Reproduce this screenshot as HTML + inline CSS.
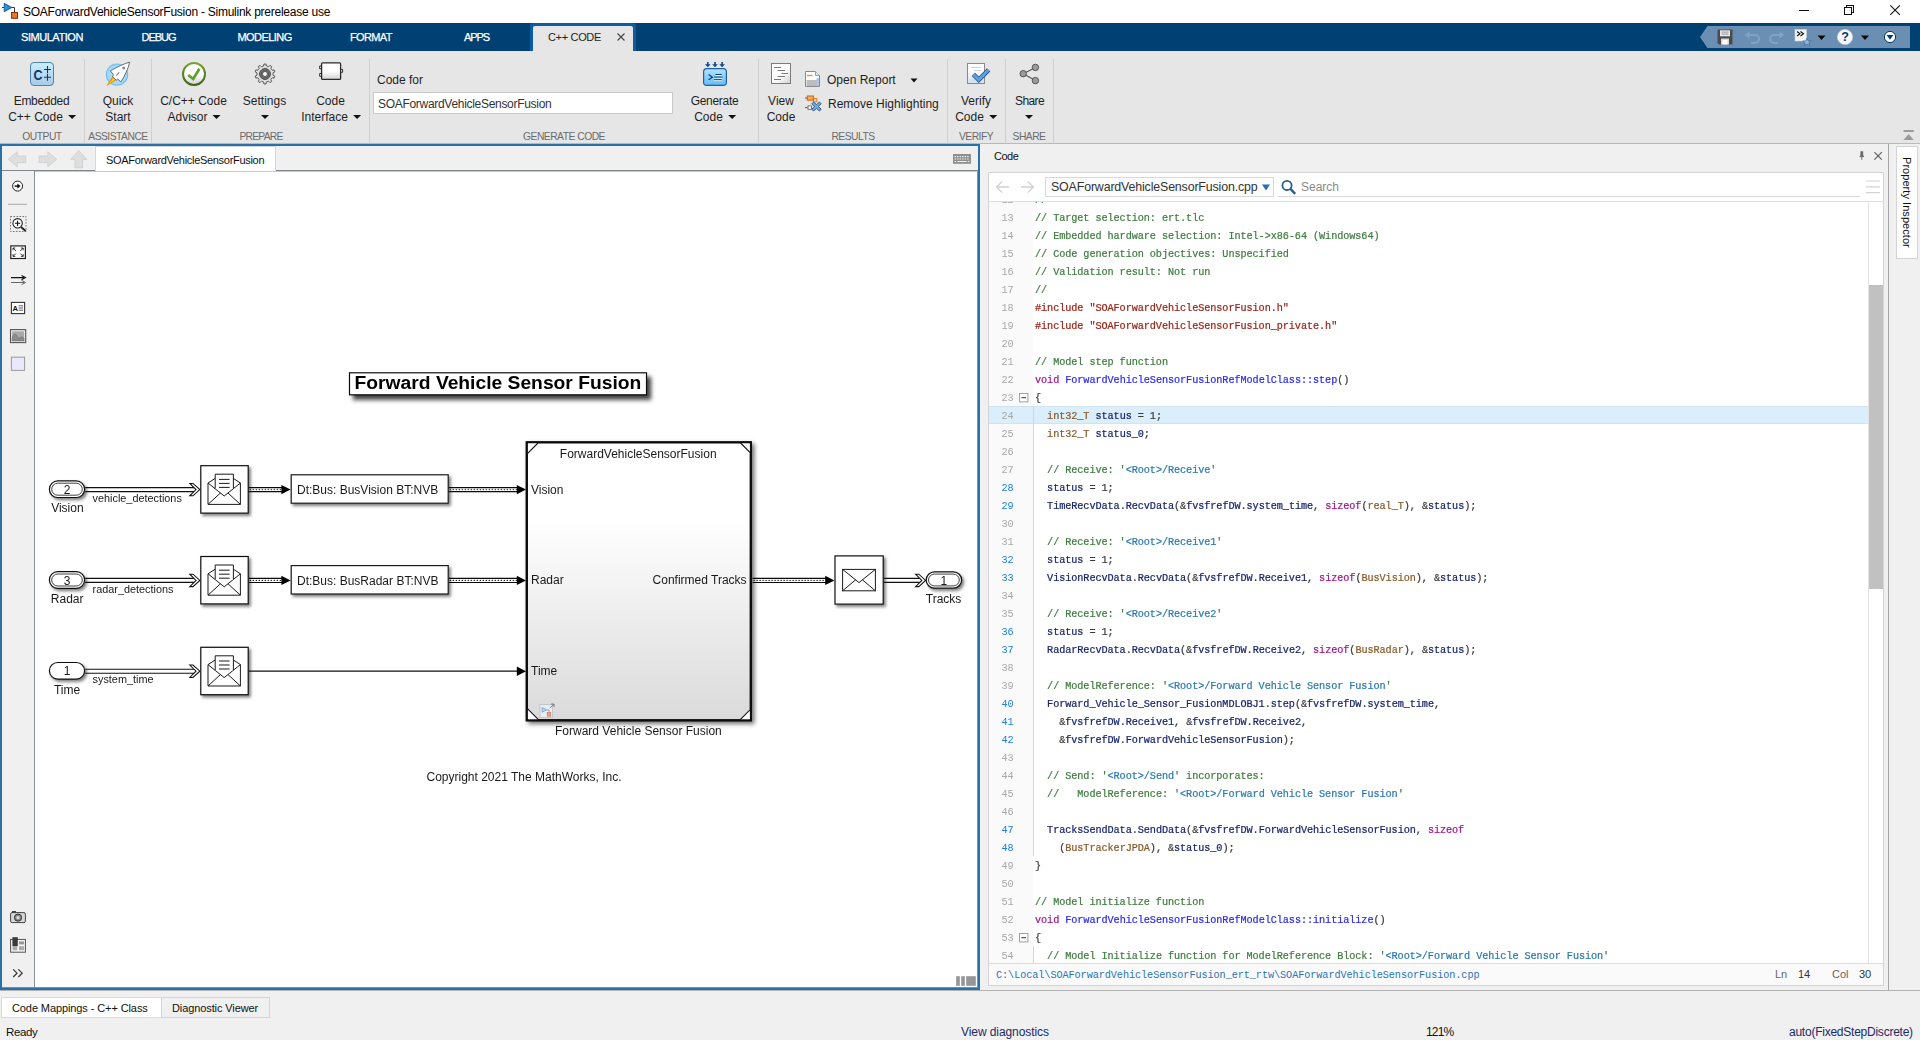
<!DOCTYPE html>
<html><head><meta charset="utf-8"><title>SOAForwardVehicleSensorFusion - Simulink prerelease use</title>
<style>
*{box-sizing:border-box;margin:0;padding:0}
html,body{width:1920px;height:1040px;overflow:hidden;background:#f0f0f0;font-family:"Liberation Sans",sans-serif;font-size:12px;color:#1a1a1a}
.a{position:absolute}
.t{position:absolute;white-space:nowrap;line-height:16px;height:16px}
#titlebar{left:0;top:0;width:1920px;height:23px;background:#fff}
#tabbar{left:0;top:23px;width:1920px;height:28px;background:#004073}
#tabbar .tb{position:absolute;top:6px;color:#fff;-webkit-text-stroke:0.25px #fff;font-size:11px;line-height:16px;white-space:nowrap;letter-spacing:-0.45px}
#acttab{left:533px;top:26px;width:100px;height:25px;background:#e6e6e6;border-radius:2px 2px 0 0}
#strip{left:0;top:51px;width:1920px;height:93px;background:#e6e6e6;border-bottom:1px solid #b9b9b9}
.sep{position:absolute;top:59px;width:1px;height:84px;background:#cfcfcf}
.lbl{position:absolute;white-space:nowrap;font-size:12px;line-height:16px;height:16px;color:#1f1f1f;text-align:center;transform:translateX(-50%)}
.sec{position:absolute;top:129px;white-space:nowrap;font-size:10.3px;line-height:16px;color:#6b6b6b;transform:translateX(-50%);letter-spacing:-0.5px}
.dd{display:inline-block;width:0;height:0;border-left:4px solid transparent;border-right:4px solid transparent;border-top:4.4px solid #111;vertical-align:middle;margin-left:5px;position:relative;top:-1px}
/* main */
#frame{left:0;top:144px;width:980px;height:846px;background:#2971a9}
#exbar{left:2px;top:146px;width:976px;height:25px;background:#f0f0f0;border-bottom:1px solid #80868c}
#extab{left:95px;top:146px;width:181px;height:25px;background:#fff;border:1px solid #d6d6d6;border-bottom:none}
#palette{left:2px;top:171px;width:33px;height:817px;border-bottom:1px solid #8a8a8a;background:#f0f0f0;border-right:1px solid #8a9096}
#canvas{left:35px;top:171px;width:943px;height:817px;border-bottom:1px solid #8a8a8a;background:#fff;border-top:1px solid #c6c8ca;border-right:1px solid #8e8e8e}
/* code panel */
#cpanel{left:980px;top:144px;width:909px;height:846px;background:#f0f0f0;border-right:1px solid #a6a6a6}
#cbox{left:988px;top:172px;width:896px;height:814px;background:#fff;border:1px solid #d4d4d4}
#gutter{left:989px;top:202px;width:44px;height:761px;background:#fafafa}
#code{will-change:transform;-webkit-text-stroke:0.22px;left:989px;top:202px;width:879px;height:761px;overflow:hidden;font-family:"Liberation Mono",monospace;font-size:10.2px;letter-spacing:-0.07px}
#code .in{position:absolute;left:0;top:-12px;width:879px}
.cl{height:18px;line-height:21.4px;position:relative;white-space:pre}
.cl.hl{background:#dbeefb;box-shadow:inset 0 1px 0 #cfe3f1,inset 0 -1px 0 #cfe3f1}
.ln{-webkit-text-stroke:0;display:inline-block;width:46px;padding-right:21.5px;text-align:right;color:#a8a8a8}
.ln.b{color:#1e7fe0}
.c{color:#3f7d3f}.k{color:#2a7ab0}.p{color:#9a2318}.m{color:#a0168f}.f{color:#2b2bf0}.y{color:#8a5a2a}.i{color:#18256e}.d{color:#3a3a3a}
#cfoot{left:989px;top:963px;width:894px;height:22px;background:#fafafa;border-top:1px solid #dcdcdc}
#sbar{left:1868px;top:202px;width:15px;height:761px;background:#fff;border-left:1px solid #e4e4e4}
#thumb{left:1869px;top:285px;width:14px;height:303.6px;background:#c1c1c1}
svg{position:absolute;overflow:visible}
</style></head><body>
<!-- TITLE BAR -->
<div class="a" id="titlebar"></div>
<svg style="left:0;top:0" width="22" height="22" viewBox="0 0 22 22"><path d="M2 7.5 H4.5 M11 7.5 H14.5 V12.5" fill="none" stroke="#3a3a3a" stroke-width="1"/><path d="M4.3 3.4 L11.6 7.5 L4.3 11.6 Z" fill="#3f8fd2" stroke="#1b66ae" stroke-width="1.1" stroke-linejoin="round"/><rect x="11.6" y="12.5" width="5.9" height="5.8" fill="#e27c22" stroke="#9a1e0c" stroke-width="1"/></svg>
<div class="t" style="left:23px;top:4px;font-size:12px;letter-spacing:-0.25px;color:#000">SOAForwardVehicleSensorFusion - Simulink prerelease use</div>
<svg style="left:1798px;top:4px" width="110" height="14" viewBox="0 0 110 14"><path d="M1 6.5 H11" stroke="#111" stroke-width="1"/><path d="M46.5 3.5 H53.5 V10.5 H46.5 Z M48.5 3.5 V1.5 H55.5 V8.5 H53.5" fill="none" stroke="#111" stroke-width="1.05"/><path d="M92.3 1.3 L101.9 10.9 M101.9 1.3 L92.3 10.9" stroke="#111" stroke-width="1.1"/></svg>
<!-- TAB BAR -->
<div class="a" id="tabbar">
<span class="tb" style="left:21px">SIMULATION</span>
<span class="tb" style="left:141.5px;letter-spacing:-1px">DEBUG</span>
<span class="tb" style="left:237.5px;letter-spacing:-0.55px">MODELING</span>
<span class="tb" style="left:350px;letter-spacing:-0.65px">FORMAT</span>
<span class="tb" style="left:464px;letter-spacing:-1.05px">APPS</span>
</div>
<div class="a" style="left:530px;top:23px;width:106px;height:28px;background:#0d5ca3;border-radius:3px 3px 0 0"></div><div class="a" id="acttab"></div>
<div class="t" style="left:548px;top:29px;font-size:11px;letter-spacing:-0.33px;color:#1f1f1f">C++ CODE</div>
<svg style="left:616px;top:32px" width="10" height="10" viewBox="0 0 10 10"><path d="M1.5 1.5 L8.5 8.5 M8.5 1.5 L1.5 8.5" stroke="#444" stroke-width="1.1"/></svg>
<!-- QAT -->
<svg style="left:1700px;top:26px" width="210" height="22" viewBox="0 0 210 22">
<path d="M0 11 L7.5 0 H210 V22 H7.5 Z" fill="#6a8fb3"/>
<!-- save -->
<g transform="translate(17.5,3.5)"><path d="M0 0 H15 V15 H1.5 L0 13.5 Z" fill="#4a4a4a"/><rect x="2.5" y="0.8" width="10" height="6" fill="#e9e9e9"/><path d="M4 2.6 H11 M4 4.6 H11" stroke="#888" stroke-width="0.8"/><rect x="3.5" y="9" width="8" height="6" fill="#d9d9d9"/><rect x="5" y="10.5" width="5" height="4.5" fill="#fff"/></g>
<!-- undo -->
<path d="M46.5 9 H55 a4 4 0 0 1 0 8 H51" fill="none" stroke="#7fa3c7" stroke-width="2"/><path d="M44.5 9 L49.5 5.5 V12.5 Z" fill="#7fa3c7"/>
<!-- redo -->
<path d="M82 9 H74 a4 4 0 0 0 0 8 H78" fill="none" stroke="#7fa3c7" stroke-width="2"/><path d="M84.5 9 L79.5 5.5 V12.5 Z" fill="#7fa3c7"/>
<!-- fav cmds -->
<rect x="95" y="3.5" width="11.5" height="11.5" fill="#f4f4f4" stroke="#cfd6dd" stroke-width="0.6"/><path d="M97 5.5 L100 7.8 L97 10 M100.5 5.5 L103.5 7.8 L100.5 10" fill="none" stroke="#111" stroke-width="1.1"/>
<path d="M107 12 L108.2 15 L111.3 15 L108.8 16.9 L109.8 20 L107 18.1 L104.2 20 L105.2 16.9 L102.7 15 L105.8 15 Z" fill="#8fb8e0" stroke="#3d6a96" stroke-width="0.7"/>
<path d="M117.5 9.5 H125.5 L121.5 14 Z" fill="#0a0a0a"/>
<!-- help -->
<circle cx="145" cy="11" r="7.6" fill="#f6f6f6" stroke="#d0d7de" stroke-width="0.6"/><text x="145" y="15.3" font-family="Liberation Sans,sans-serif" font-weight="bold" font-size="12.5" text-anchor="middle" fill="#003a6b">?</text>
<path d="M161 9.5 H169 L165 14 Z" fill="#0a0a0a"/>
<circle cx="190" cy="11" r="5.6" fill="#fff" stroke="#003a6b" stroke-width="1"/><path d="M186.6 9 H193.4 L190 13.8 Z" fill="#003a6b"/>
</svg>
<!-- TOOLSTRIP -->
<div class="a" id="strip"></div>
<div class="sep" style="left:84px"></div><div class="sep" style="left:151px"></div><div class="sep" style="left:369px"></div><div class="sep" style="left:758px"></div><div class="sep" style="left:947px"></div><div class="sep" style="left:1005px"></div><div class="sep" style="left:1053px"></div>
<div class="lbl" style="left:41.5px;top:93px;letter-spacing:-0.3px">Embedded</div>
<div class="lbl" style="left:42px;top:109px">C++ Code<i class="dd"></i></div>
<div class="lbl" style="left:118px;top:93px">Quick</div>
<div class="lbl" style="left:118px;top:109px">Start</div>
<div class="lbl" style="left:193.5px;top:93px">C/C++ Code</div>
<div class="lbl" style="left:194px;top:109px">Advisor<i class="dd"></i></div>
<div class="lbl" style="left:264.5px;top:93px">Settings</div>
<div class="lbl" style="left:264.5px;top:109px"><i class="dd" style="margin-left:0"></i></div>
<div class="lbl" style="left:330.5px;top:93px">Code</div>
<div class="lbl" style="left:331px;top:109px">Interface<i class="dd"></i></div>
<div class="t" style="left:377px;top:72px;color:#1f1f1f">Code for</div>
<div class="a" style="left:373px;top:92px;width:300px;height:22px;background:#fff;border:1px solid #c9c9c9"></div>
<div class="t" style="left:378px;top:96px;font-size:12px;letter-spacing:-0.3px;color:#333">SOAForwardVehicleSensorFusion</div>
<div class="lbl" style="left:714.5px;top:93px;letter-spacing:-0.3px">Generate</div>
<div class="lbl" style="left:715px;top:109px">Code<i class="dd"></i></div>
<div class="lbl" style="left:781px;top:93px">View</div>
<div class="lbl" style="left:781px;top:109px">Code</div>
<div class="t" style="left:827px;top:72px;color:#1f1f1f">Open Report</div>
<svg style="left:910px;top:78px" width="8" height="5" viewBox="0 0 8 5"><path d="M0.5 0.5 H7.5 L4 4.5 Z" fill="#111"/></svg>
<div class="t" style="left:828px;top:96px;color:#1f1f1f">Remove Highlighting</div>
<div class="lbl" style="left:976px;top:93px">Verify</div>
<div class="lbl" style="left:976px;top:109px">Code<i class="dd"></i></div>
<div class="lbl" style="left:1029.5px;top:93px;letter-spacing:-0.6px">Share</div>
<div class="lbl" style="left:1029px;top:109px"><i class="dd" style="margin-left:0"></i></div>
<div class="sec" style="left:42px">OUTPUT</div>
<div class="sec" style="left:118px">ASSISTANCE</div>
<div class="sec" style="left:261px;letter-spacing:-0.75px">PREPARE</div>
<div class="sec" style="left:564px">GENERATE CODE</div>
<div class="sec" style="left:853px">RESULTS</div>
<div class="sec" style="left:976px">VERIFY</div>
<div class="sec" style="left:1029px">SHARE</div>
<svg style="left:1901.5px;top:129px" width="14" height="12" viewBox="0 0 14 12"><path d="M1.5 2 H11.7" stroke="#929292" stroke-width="1.8"/><path d="M6.6 5 L11.7 11 H1.5 Z" fill="#9a9a9a"/></svg>
<!-- TOOLSTRIP ICONS -->
<svg style="left:0;top:51px" width="1100" height="93" viewBox="0 51 1100 93">
<defs>
<linearGradient id="gcpp" x1="0" y1="0" x2="0" y2="1"><stop offset="0" stop-color="#cdeefd"/><stop offset="1" stop-color="#a6cbe6"/></linearGradient>
<linearGradient id="ggen" x1="0" y1="0" x2="0" y2="1"><stop offset="0" stop-color="#b5e2fc"/><stop offset="1" stop-color="#63bdf3"/></linearGradient>
<linearGradient id="gring" x1="0" y1="0" x2="0" y2="1"><stop offset="0" stop-color="#74a530"/><stop offset="1" stop-color="#3c6418"/></linearGradient>
<linearGradient id="gin" x1="0" y1="0" x2="0" y2="1"><stop offset="0.5" stop-color="#ffffff"/><stop offset="1" stop-color="#d2d2d2"/></linearGradient>
<linearGradient id="gdoc" x1="0" y1="0" x2="1" y2="1"><stop offset="0.55" stop-color="#ffffff"/><stop offset="1" stop-color="#cfcfcf"/></linearGradient>
<linearGradient id="gver" x1="0" y1="0" x2="0" y2="1"><stop offset="0.3" stop-color="#ffffff"/><stop offset="1" stop-color="#cfe0f0"/></linearGradient>
<radialGradient id="ggear" cx="0.5" cy="0.5" r="0.5"><stop offset="0.25" stop-color="#fff"/><stop offset="0.32" stop-color="#444"/><stop offset="0.55" stop-color="#9a9a9a"/><stop offset="0.62" stop-color="#3c3c3c"/><stop offset="0.75" stop-color="#e8e8e8"/><stop offset="1" stop-color="#dcdcdc"/></radialGradient>
</defs>
<!-- C++ -->
<rect x="30.5" y="62.5" width="23" height="23" rx="3.5" fill="url(#gcpp)" stroke="#4b83b3" stroke-width="1"/>
<text x="33.4" y="79.5" font-family="Liberation Sans,sans-serif" font-weight="bold" font-size="14.6" textLength="9" lengthAdjust="spacingAndGlyphs" fill="#0b3b74">C</text>
<path d="M44 69.5 H51 M47.5 66 V73 M44 77.2 H51 M47.5 73.7 V80.7" stroke="#0b3b74" stroke-width="1.1" fill="none"/>
<!-- rocket -->
<circle cx="117" cy="74.6" r="10.6" fill="#a4dbfb" stroke="#74bdf4" stroke-width="1.2"/>
<path d="M112.8 76.2 L116.8 80 L106 85.9 Z" fill="#ff8a00"/><path d="M113.8 77.6 L115.6 79.2 L108.6 84 Z" fill="#ffd21a"/>
<path d="M129.7 62.1 C124.5 63.4 117 67.2 110.3 70.8 L113.4 74.6 L112.6 76.6 L116.2 80.2 L117.6 79 L120.9 81.9 C124.4 76.4 128.4 68.4 129.7 62.1 Z" fill="#fff" stroke="#4a4a4a" stroke-width="0.8" stroke-linejoin="round"/>
<circle cx="123.7" cy="68" r="1.5" fill="#8a8a8a"/><path d="M116.2 75.6 L119.3 72.4" stroke="#8a8a8a" stroke-width="1.2"/>
<!-- check -->
<circle cx="194" cy="74" r="11" fill="url(#gin)" stroke="url(#gring)" stroke-width="2"/>
<path d="M188.2 75 L193.2 79 L199.4 68.8" fill="none" stroke="#62a02a" stroke-width="2.7"/>
<!-- gear -->
<g transform="translate(265,74)">
<path d="M-1.37 -7.98 L-1.07 -9.94 L1.07 -9.94 L1.37 -7.98 L3.59 -7.26 L4.98 -8.67 L6.71 -7.42 L5.80 -5.66 L7.17 -3.77 L9.13 -4.09 L9.79 -2.06 L8.02 -1.17 L8.02 1.17 L9.79 2.06 L9.13 4.09 L7.17 3.77 L5.80 5.66 L6.71 7.42 L4.98 8.67 L3.59 7.26 L1.37 7.98 L1.07 9.94 L-1.07 9.94 L-1.37 7.98 L-3.59 7.26 L-4.98 8.67 L-6.71 7.42 L-5.80 5.66 L-7.17 3.77 L-9.13 4.09 L-9.79 2.06 L-8.02 1.17 L-8.02 -1.17 L-9.79 -2.06 L-9.13 -4.09 L-7.17 -3.77 L-5.80 -5.66 L-6.71 -7.42 L-4.98 -8.67 L-3.59 -7.26 Z" fill="#e0e0e0" stroke="#4c4c4c" stroke-width="0.9" stroke-linejoin="round"/>
<circle r="5.4" fill="#8a8a8a" stroke="#3a3a3a" stroke-width="1"/>
<circle r="3.7" fill="none" stroke="#5a5a5a" stroke-width="1.2"/>
<circle r="2.5" fill="#fff" stroke="#3a3a3a" stroke-width="0.8"/>
</g>
<!-- code interface -->
<path d="M319.7 66 H322 V68.8 H319.7 Z M319.7 73.5 H322 V76.3 H319.7 Z M340 69.3 H342.6 V72.3 H340 Z" fill="#fff" stroke="#2a2a2a" stroke-width="1"/>
<rect x="321.6" y="62.8" width="19" height="16.6" rx="1" fill="url(#gin)" stroke="#2a2a2a" stroke-width="1.3"/>
<!-- generate -->
<rect x="703.6" y="68.6" width="22.8" height="16.8" rx="3.2" fill="url(#ggen)" stroke="#1f5fa9" stroke-width="1.2"/>
<path d="M708.6 74.6 L712.4 77.2 L708.6 79.8" fill="none" stroke="#0c3f7d" stroke-width="1.2"/>
<path d="M715.5 75.4 H721.8 M714 78 H722.6 M714 80.6 H721.8" stroke="#fff" stroke-width="1"/>
<path d="M715.5 74.5 H721.8 M714 77.1 H722.6 M714 79.7 H721.8" stroke="#0c3f7d" stroke-width="1"/>
<g fill="#0b4a8f"><path id="da" d="M707 62 H708.6 V64.2 H710.6 L707.8 67.2 L705 64.2 H707 Z"/><use href="#da" x="7.2"/><use href="#da" x="14.3"/></g>
<!-- view code -->
<rect x="771.5" y="63.5" width="19" height="20" fill="url(#gdoc)" stroke="#7c7c7c" stroke-width="1"/>
<path d="M774 67.5 H781 M777.5 70.5 H785 M781.5 73.5 H788 M777.5 76.5 H785 M774 79.5 H781" stroke="#7a7a7a" stroke-width="1"/>
<!-- open report -->
<path d="M805.5 71.5 H815.5 L819.5 75.5 V86.5 H805.5 Z" fill="#fff" stroke="#8a8a8a" stroke-width="1"/>
<path d="M815.5 71.5 V75.5 H819.5" fill="#e8e8e8" stroke="#8a8a8a" stroke-width="0.8"/>
<path d="M807 75.5 H812.5" stroke="#f08a3c" stroke-width="1.4"/>
<rect x="806.5" y="80" width="12.5" height="6" fill="#bdbdbd"/><rect x="816.5" y="78" width="2.5" height="8" fill="#a9c6e6"/>
<!-- remove highlighting -->
<path d="M805 98 H807 M805 107.6 H807.6" stroke="#555" stroke-width="1" fill="none"/>
<rect x="813.4" y="98.6" width="3.4" height="3.2" fill="#f4d9b8" stroke="#dd7a22" stroke-width="1"/>
<rect x="807.4" y="96" width="6" height="4.2" fill="#f6a85e" stroke="#d96b12" stroke-width="1.1"/>
<rect x="808" y="105.9" width="3.6" height="3.4" fill="#fff" stroke="#666" stroke-width="0.9"/>
<path d="M813.6 102 L816.5 104.6 L819.4 102 L821.2 103.8 L818.4 106.5 L821.2 109.2 L819.4 111 L816.5 108.4 L813.6 111 L811.8 109.2 L814.6 106.5 L811.8 103.8 Z" fill="#76a8e0" stroke="#27507f" stroke-width="0.9" stroke-linejoin="round"/>
<!-- verify -->
<rect x="967.5" y="63.5" width="17" height="20" fill="url(#gver)" stroke="#8a8a8a" stroke-width="1"/>
<path d="M971 67.5 H981 M974 70.5 H981 M971 80 H976" stroke="#cfcfcf" stroke-width="1"/>
<path d="M973.4 74.4 L978.8 79.8 L988.6 69.8" fill="none" stroke="#1f4f8c" stroke-width="4.6" stroke-linejoin="miter"/>
<path d="M973.4 74.4 L978.8 79.8 L988.6 69.8" fill="none" stroke="#5f9fe0" stroke-width="3" stroke-linejoin="miter"/>
<!-- share -->
<path d="M1035.4 67.4 L1023.2 73.7 L1035.4 80.6" fill="none" stroke="#555" stroke-width="1.1"/>
<g fill="#9c9c9c" stroke="#555" stroke-width="1"><circle cx="1035.4" cy="67.4" r="3.2"/><circle cx="1023.2" cy="73.7" r="3.2"/><circle cx="1035.4" cy="80.6" r="3.2"/></g>
</svg>
<!-- MAIN FRAME -->
<div class="a" id="frame"></div>
<div class="a" id="exbar"></div>
<div class="a" id="extab"></div>
<div class="t" style="left:106px;top:152px;font-size:11px;letter-spacing:-0.3px;color:#111">SOAForwardVehicleSensorFusion</div>
<svg style="left:2px;top:146px" width="100" height="25" viewBox="2 146 100 25">
<g fill="#dedede" stroke="#cdcdcd" stroke-width="0.8">
<path d="M8.2 159.3 L17.2 151.8 V156 H25.8 V162.6 H17.2 V166.8 Z"/>
<path d="M56.8 159.3 L47.8 151.8 V156 H39.2 V162.6 H47.8 V166.8 Z"/>
<path d="M78.8 150.4 L86.8 159.4 H82.6 V167.8 H75 V159.4 H70.8 Z"/>
</g></svg>
<svg style="left:953px;top:153px" width="20" height="13" viewBox="0 0 20 13"><rect x="0" y="1" width="18" height="9.8" fill="#8f8f8f"/><path d="M1.6 3.6 H16.6 M1.6 6 H16.6" stroke="#f0f0f0" stroke-width="1.1" stroke-dasharray="1.5 1"/><path d="M1.6 8.5 H3.2 M4.4 8.5 H13.6 M14.8 8.5 H16.6" stroke="#f0f0f0" stroke-width="1.1"/></svg>
<div class="a" id="palette"></div>
<div class="a" id="canvas"></div>
<!-- palette icons -->
<svg style="left:2px;top:171px" width="33" height="816" viewBox="2 171 33 816">
<circle cx="17.6" cy="186.1" r="5" fill="#fff" stroke="#222" stroke-width="1"/><path d="M14.6 186.1 H18.6" stroke="#111" stroke-width="1.5"/><path d="M17.4 183.5 L20.6 186.1 L17.4 188.7 Z" fill="#111"/>
<path d="M8 204.3 H27" stroke="#a8a8a8" stroke-width="1"/>
<rect x="10.5" y="216.5" width="15.5" height="15" fill="none" stroke="#666" stroke-width="0.9" stroke-dasharray="1.6 1.4"/>
<circle cx="17.6" cy="223.3" r="4.7" fill="#fff" stroke="#222" stroke-width="1.1"/><path d="M15 223.3 H20.2 M17.6 220.7 V225.9" stroke="#111" stroke-width="1.1"/><path d="M21 227 L25.6 231" stroke="#222" stroke-width="1.8"/>
<rect x="10.8" y="245.9" width="14.6" height="12.6" fill="#fff" stroke="#222" stroke-width="1.2"/>
<path d="M13 248 L16 251 M13 248 H15.3 M13 248 V250.3 M23.2 248 L20.2 251 M23.2 248 H20.9 M23.2 248 V250.3 M13 256.4 L16 253.4 M13 256.4 H15.3 M13 256.4 V254.1 M23.2 256.4 L20.2 253.4 M23.2 256.4 H20.9 M23.2 256.4 V254.1" stroke="#222" stroke-width="0.9" fill="none"/>
<path d="M11 277.6 H24 M21.5 275.4 L25.5 277.6 L21.5 279.8" stroke="#111" stroke-width="1.1" fill="none"/>
<path d="M11 282.5 H24 M21.5 280.3 L25.5 282.5 L21.5 284.7" stroke="#444" stroke-width="0.8" fill="none"/>
<rect x="11.4" y="302.4" width="13.2" height="11.2" fill="#fff" stroke="#333" stroke-width="1.1"/>
<text x="12.6" y="311.2" font-family="Liberation Sans,sans-serif" font-weight="bold" font-size="7.5" fill="#111">A</text><path d="M18.6 305.8 H23 M18.6 308 H23 M18.6 310.2 H23" stroke="#333" stroke-width="0.8"/>
<rect x="10.5" y="329.6" width="15.2" height="13" fill="#e8e8e8" stroke="#555" stroke-width="1.1"/><rect x="12.2" y="331.4" width="11.8" height="9.4" fill="#a9a9a9"/><path d="M12.2 338.5 C13.5 333 16 333 17.5 337.5 C19 340 21 334.5 24 338.5 V340.8 H12.2 Z" fill="#8c8c8c" stroke="#666" stroke-width="0.6"/>
<rect x="11.4" y="357.2" width="13.2" height="13.2" fill="#e9e9fb" stroke="#9a9a9a" stroke-width="1"/>
<!-- bottom -->
<rect x="10.6" y="912.6" width="14.8" height="10" rx="1.5" fill="#d8d8d8" stroke="#444" stroke-width="1"/><rect x="12" y="911" width="4" height="2" fill="#444"/><circle cx="18" cy="917.6" r="3.6" fill="#888" stroke="#333" stroke-width="1"/><circle cx="18" cy="917.6" r="1.6" fill="#ddd"/>
<rect x="10.6" y="939.4" width="14.8" height="12.8" fill="#f4f4f4" stroke="#555" stroke-width="1"/><rect x="12.4" y="937.2" width="5.4" height="9" fill="#3a3a3a"/><rect x="19" y="941.4" width="5" height="3" fill="#999"/><rect x="12.6" y="946.2" width="4.6" height="4" fill="#aaa"/><rect x="19" y="946.2" width="5" height="4" fill="#aaa"/>
<path d="M13.2 969.4 L17 973.2 L13.2 977 M18.4 969.4 L22.2 973.2 L18.4 977" stroke="#333" stroke-width="1.2" fill="none"/>
</svg>
<svg style="left:956px;top:976px" width="20" height="10" viewBox="0 0 20 10"><rect x="0.2" y="0.2" width="3.6" height="9.6" fill="#969696"/><rect x="5.2" y="0.2" width="3.6" height="9.6" fill="#969696"/><rect x="10.2" y="0.2" width="9.6" height="9.6" fill="#969696"/></svg>
<!-- DIAGRAM -->
<svg style="left:35px;top:172px;will-change:transform" width="941" height="815" viewBox="35 172 941 815" font-family="Liberation Sans,sans-serif" fill="#1a1a1a">
<defs>
<filter id="sh" x="-20%" y="-20%" width="150%" height="150%"><feDropShadow dx="2" dy="2.2" stdDeviation="1.5" flood-color="#000" flood-opacity="0.5"/></filter>
<filter id="sh2" x="-10%" y="-30%" width="130%" height="190%"><feDropShadow dx="4" dy="4.5" stdDeviation="2" flood-color="#000" flood-opacity="0.75"/></filter>
<filter id="sh3" x="-10%" y="-10%" width="125%" height="125%"><feDropShadow dx="2.5" dy="2.5" stdDeviation="2" flood-color="#000" flood-opacity="0.55"/></filter>
<linearGradient id="gbig" x1="0" y1="0" x2="0" y2="1"><stop offset="0.28" stop-color="#ffffff"/><stop offset="1" stop-color="#dadada"/></linearGradient>
<g id="env" fill="none" stroke="#1a1a1a" stroke-width="1">
<path d="M0 0 L7.2 -4.6 M32.4 0 L25.4 -4.6 M0 0 V21.4 H32.4 V0"/>
<path d="M0 0 L16.2 13 L32.4 0"/>
<path d="M0 21.4 L12.4 10 M32.4 21.4 L20 10"/>
<path d="M7.2 5.8 V-8.8 H25.4 V5.8" fill="#fff"/>
<path d="M11 -3.6 H21.6 M11 0.4 H21.6 M11 4.4 H21.6"/>
</g>
<path id="chev" d="M-10 -6.2 H-6.8 L0 0 L-6.8 6.2 H-10 L-3.8 0 Z" fill="#fff" stroke="#111" stroke-width="1.05" stroke-linejoin="miter"/>
</defs>
<!-- title annotation -->
<rect x="349.5" y="372.8" width="297" height="22" fill="#fff" stroke="#111" stroke-width="1.2" filter="url(#sh2)"/>
<text x="354.6" y="389.4" font-size="19.25" font-weight="bold" fill="#000">Forward Vehicle Sensor Fusion</text>
<!-- big block -->
<rect x="526.8" y="442.3" width="224" height="278" fill="url(#gbig)" stroke="#0a0a0a" stroke-width="2.4" filter="url(#sh3)"/>
<path d="M538 443.4 L527.9 453.6 V443.4 Z M740.6 443.4 L749.8 453.6 V443.4 Z M538.2 719.2 L527.9 708.8 V719.2 Z M740.4 719.2 L749.8 708.8 V719.2 Z" fill="#fff"/><path d="M538 443 L527.4 453.6 M740.6 443 L751.2 453.6 M538.4 719.6 L527.4 708.6 M740.2 719.6 L751.2 708.6" stroke="#111" stroke-width="1.1" fill="none"/>
<text x="638.2" y="458.4" font-size="12" text-anchor="middle">ForwardVehicleSensorFusion</text>
<text x="531" y="493.6" font-size="12">Vision</text>
<text x="531" y="584.4" font-size="12">Radar</text>
<text x="531" y="675.2" font-size="12">Time</text>
<text x="746.6" y="584.4" font-size="12" text-anchor="end">Confirmed Tracks</text>
<text x="638.4" y="735.2" font-size="12" text-anchor="middle">Forward Vehicle Sensor Fusion</text>
<text x="524" y="781" font-size="12" text-anchor="middle">Copyright 2021 The MathWorks, Inc.</text>
<!-- model ref badge -->
<g><rect x="540" y="704.6" width="12.4" height="13" fill="#e9edf1" stroke="#b9bfc7" stroke-width="0.8"/><path d="M542.2 707.6 L546.6 709.9 L542.2 712.2 Z" fill="#bcd6ee" stroke="#6a9acb" stroke-width="0.7"/><path d="M546.6 710 H549 V712.6" fill="none" stroke="#888" stroke-width="0.7"/><rect x="547.2" y="712.6" width="3.6" height="3.6" fill="#eaa48c" stroke="#c4745a" stroke-width="0.6"/><path d="M549.8 708 L553.8 704.2 M551 704 H554 V707" fill="none" stroke="#666" stroke-width="0.8"/></g>
<!-- ROW 1 -->
<g filter="url(#sh)"><rect x="49.4" y="480.9" width="35.2" height="16.6" rx="8.3" fill="#fff" stroke="#111" stroke-width="1.2"/></g>
<rect x="51.7" y="483.2" width="30.6" height="12" rx="6" fill="none" stroke="#111" stroke-width="0.8"/>
<text x="67" y="494.1" font-size="12" text-anchor="middle">2</text>
<text x="67.4" y="512.4" font-size="12" text-anchor="middle">Vision</text>
<path d="M85.2 487.6 H194 M85.2 491.6 H194" stroke="#111" stroke-width="1.1"/>
<use href="#chev" x="199.8" y="489.6"/>
<text x="92.6" y="502.2" font-size="10.85">vehicle_detections</text>
<rect x="200.8" y="465.7" width="47.4" height="47.4" fill="#fff" stroke="#111" stroke-width="1.2" filter="url(#sh)"/>
<use href="#env" x="208" y="483"/>
<path d="M248.8 487.55 H283.0 M248.8 491.65 H283.0" stroke="#0a0a0a" stroke-width="1.15"/><path d="M250.3 489.6 H282.0" stroke="#0a0a0a" stroke-width="1.35" stroke-linecap="round" stroke-dasharray="0 3"/>
<path d="M281.4 484.9 L290.6 489.6 L281.4 494.3 Z" fill="#000"/>
<rect x="291.2" y="474.8" width="157" height="28.4" fill="#fff" stroke="#1a1a1a" stroke-width="1.2" filter="url(#sh)"/>
<text x="297" y="494" font-size="12">Dt:Bus: BusVision BT:NVB</text>
<path d="M448.8 487.55 H519.0 M448.8 491.65 H519.0" stroke="#0a0a0a" stroke-width="1.15"/><path d="M450.3 489.6 H518.0" stroke="#0a0a0a" stroke-width="1.35" stroke-linecap="round" stroke-dasharray="0 3"/>
<path d="M516.8 484.9 L526 489.6 L516.8 494.3 Z" fill="#000"/>
<!-- ROW 2 -->
<g filter="url(#sh)"><rect x="49.4" y="571.7" width="35.2" height="16.6" rx="8.3" fill="#fff" stroke="#111" stroke-width="1.2"/></g>
<rect x="51.7" y="574" width="30.6" height="12" rx="6" fill="none" stroke="#111" stroke-width="0.8"/>
<text x="67" y="585.2" font-size="12" text-anchor="middle">3</text>
<text x="67.2" y="603.2" font-size="12" text-anchor="middle">Radar</text>
<path d="M85.2 578.4 H194 M85.2 582.4 H194" stroke="#111" stroke-width="1.1"/>
<use href="#chev" x="199.8" y="580.4"/>
<text x="92.6" y="593" font-size="10.85">radar_detections</text>
<rect x="200.8" y="556.5" width="47.4" height="47.4" fill="#fff" stroke="#111" stroke-width="1.2" filter="url(#sh)"/>
<use href="#env" x="208" y="573.8"/>
<path d="M248.8 578.35 H283.0 M248.8 582.45 H283.0" stroke="#0a0a0a" stroke-width="1.15"/><path d="M250.3 580.4 H282.0" stroke="#0a0a0a" stroke-width="1.35" stroke-linecap="round" stroke-dasharray="0 3"/>
<path d="M281.4 575.7 L290.6 580.4 L281.4 585.1 Z" fill="#000"/>
<rect x="291.2" y="565.6" width="157" height="28.4" fill="#fff" stroke="#1a1a1a" stroke-width="1.2" filter="url(#sh)"/>
<text x="297" y="584.8" font-size="12">Dt:Bus: BusRadar BT:NVB</text>
<path d="M448.8 578.35 H519.0 M448.8 582.45 H519.0" stroke="#0a0a0a" stroke-width="1.15"/><path d="M450.3 580.4 H518.0" stroke="#0a0a0a" stroke-width="1.35" stroke-linecap="round" stroke-dasharray="0 3"/>
<path d="M516.8 575.7 L526 580.4 L516.8 585.1 Z" fill="#000"/>
<!-- ROW 3 -->
<g filter="url(#sh)"><rect x="49.4" y="662.5" width="35.2" height="16.6" rx="8.3" fill="#fff" stroke="#111" stroke-width="1.2"/></g>
<text x="67" y="675.2" font-size="12" text-anchor="middle">1</text>
<text x="67" y="694" font-size="12" text-anchor="middle">Time</text>
<path d="M85.2 669.2 H194 M85.2 673.2 H194" stroke="#111" stroke-width="1.1"/>
<use href="#chev" x="199.8" y="671.2"/>
<text x="92.6" y="683.1" font-size="10.85">system_time</text>
<rect x="200.8" y="647.3" width="47.4" height="47.4" fill="#fff" stroke="#111" stroke-width="1.2" filter="url(#sh)"/>
<use href="#env" x="208" y="664.6"/>
<path d="M248.8 671.2 H519" stroke="#111" stroke-width="1.2"/>
<path d="M516.8 666.5 L526 671.2 L516.8 675.9 Z" fill="#000"/>
<!-- OUTPUT -->
<path d="M752.6 578.35 H827.0 M752.6 582.45 H827.0" stroke="#0a0a0a" stroke-width="1.15"/><path d="M754.1 580.4 H826.0" stroke="#0a0a0a" stroke-width="1.35" stroke-linecap="round" stroke-dasharray="0 3"/>
<path d="M825.2 575.7 L834.4 580.4 L825.2 585.1 Z" fill="#000"/>
<rect x="835" y="555.9" width="48.2" height="48.2" fill="#fff" stroke="#111" stroke-width="1.2" filter="url(#sh)"/>
<g fill="none" stroke="#1a1a1a" stroke-width="1"><rect x="842.6" y="569.4" width="32.8" height="21.4"/><path d="M842.6 569.4 L859 582.6 L875.4 569.4 M842.6 590.8 L855.6 579.8 M875.4 590.8 L862.4 579.8"/></g>
<path d="M883.8 578.4 H919.8 M883.8 582.4 H919.8" stroke="#111" stroke-width="1.1"/>
<use href="#chev" x="925.6" y="580.4"/>
<g filter="url(#sh)"><rect x="926.2" y="571.8" width="35.4" height="16.4" rx="8.2" fill="#fff" stroke="#111" stroke-width="1.2"/></g>
<rect x="928.5" y="574.1" width="30.8" height="11.8" rx="5.9" fill="none" stroke="#111" stroke-width="0.8"/>
<text x="943.8" y="585" font-size="12" text-anchor="middle">1</text>
<text x="943.6" y="603.2" font-size="12" text-anchor="middle">Tracks</text>
</svg>
<!-- CODE PANEL -->
<div class="a" id="cpanel"></div>
<div class="t" style="left:994px;top:148px;font-size:11px;letter-spacing:-0.5px;color:#111">Code</div>
<svg style="left:1856px;top:150px" width="30" height="12" viewBox="0 0 30 12"><path d="M4.4 1.2 H7.2 V5.8 H8 V7 H3.6 V5.8 H4.4 Z" fill="#6a6a6a"/><path d="M5.8 7 V9.8" stroke="#6a6a6a" stroke-width="1"/><path d="M18.4 2.2 L25.8 9.6 M25.8 2.2 L18.4 9.6" stroke="#5a5a5a" stroke-width="1.1"/></svg>
<div class="a" id="cbox"></div>
<svg style="left:989px;top:173px" width="895" height="29" viewBox="989 173 895 29">
<path d="M1009 187 H997 M1002.2 181.4 L996.6 187 L1002.2 192.6" fill="none" stroke="#d0d0d0" stroke-width="1.3"/>
<path d="M1021 187 H1033 M1027.8 181.4 L1033.4 187 L1027.8 192.6" fill="none" stroke="#d0d0d0" stroke-width="1.3"/>
<rect x="1045.5" y="177.5" width="228" height="19" fill="#fcfcfc" stroke="#d9d9d9" stroke-width="1"/>
<path d="M1262 184.6 H1270 L1266 190.6 Z" fill="#2d6cb0"/>
<circle cx="1287" cy="185.4" r="4.6" fill="none" stroke="#2a5f8f" stroke-width="1.8"/><path d="M1290.4 188.9 L1295.2 193.8" stroke="#2a5f8f" stroke-width="2.4"/>
<path d="M1278 196.6 H1860" stroke="#d6d6d6" stroke-width="1"/>
<path d="M1866 181 H1880 M1866 186.8 H1880 M1866 192.6 H1880" stroke="#d4d4d4" stroke-width="1.2"/>
<path d="M989 201.5 H1884" stroke="#dedede" stroke-width="1"/>
</svg>
<div class="t" style="left:1051px;top:179px;font-size:12.4px;letter-spacing:-0.15px;color:#333">SOAForwardVehicleSensorFusion.cpp</div>
<div class="t" style="left:1301px;top:179px;font-size:12px;color:#8a8a8a">Search</div>
<div class="a" id="gutter"></div>
<div class="a" id="code"><div class="in">
<div class="cl"><span class="ln">12</span><span class="c">//</span></div>
<div class="cl"><span class="ln">13</span><span class="c">// Target selection: ert.tlc</span></div>
<div class="cl"><span class="ln">14</span><span class="c">// Embedded hardware selection: Intel-&gt;x86-64 (Windows64)</span></div>
<div class="cl"><span class="ln">15</span><span class="c">// Code generation objectives: Unspecified</span></div>
<div class="cl"><span class="ln">16</span><span class="c">// Validation result: Not run</span></div>
<div class="cl"><span class="ln">17</span><span class="c">//</span></div>
<div class="cl"><span class="ln">18</span><span class="p">#include "SOAForwardVehicleSensorFusion.h"</span></div>
<div class="cl"><span class="ln">19</span><span class="p">#include "SOAForwardVehicleSensorFusion_private.h"</span></div>
<div class="cl"><span class="ln">20</span></div>
<div class="cl"><span class="ln">21</span><span class="c">// Model step function</span></div>
<div class="cl"><span class="ln">22</span><span class="m">void</span> <span class="f">ForwardVehicleSensorFusionRefModelClass::step</span><span class="d">()</span></div>
<div class="cl"><span class="ln">23</span><span class="d">{</span></div>
<div class="cl hl"><span class="ln">24</span>  <span class="y">int32_T</span> <span class="i">status</span> <span class="d">=</span> <span class="d">1;</span></div>
<div class="cl"><span class="ln">25</span>  <span class="y">int32_T</span> <span class="i">status_0</span><span class="d">;</span></div>
<div class="cl"><span class="ln">26</span></div>
<div class="cl"><span class="ln">27</span>  <span class="c">// Receive: '</span><span class="k">&lt;Root&gt;/Receive</span><span class="c">'</span></div>
<div class="cl"><span class="ln b">28</span>  <span class="i">status</span> <span class="d">=</span> <span class="d">1;</span></div>
<div class="cl"><span class="ln b">29</span>  <span class="i">TimeRecvData</span><span class="d">.</span><span class="i">RecvData</span><span class="d">(&amp;</span><span class="i">fvsfrefDW</span><span class="d">.</span><span class="i">system_time</span><span class="d">,</span> <span class="m">sizeof</span><span class="d">(</span><span class="y">real_T</span><span class="d">),</span> <span class="d">&amp;</span><span class="i">status</span><span class="d">);</span></div>
<div class="cl"><span class="ln">30</span></div>
<div class="cl"><span class="ln">31</span>  <span class="c">// Receive: '</span><span class="k">&lt;Root&gt;/Receive1</span><span class="c">'</span></div>
<div class="cl"><span class="ln b">32</span>  <span class="i">status</span> <span class="d">=</span> <span class="d">1;</span></div>
<div class="cl"><span class="ln b">33</span>  <span class="i">VisionRecvData</span><span class="d">.</span><span class="i">RecvData</span><span class="d">(&amp;</span><span class="i">fvsfrefDW</span><span class="d">.</span><span class="i">Receive1</span><span class="d">,</span> <span class="m">sizeof</span><span class="d">(</span><span class="y">BusVision</span><span class="d">),</span> <span class="d">&amp;</span><span class="i">status</span><span class="d">);</span></div>
<div class="cl"><span class="ln">34</span></div>
<div class="cl"><span class="ln">35</span>  <span class="c">// Receive: '</span><span class="k">&lt;Root&gt;/Receive2</span><span class="c">'</span></div>
<div class="cl"><span class="ln b">36</span>  <span class="i">status</span> <span class="d">=</span> <span class="d">1;</span></div>
<div class="cl"><span class="ln b">37</span>  <span class="i">RadarRecvData</span><span class="d">.</span><span class="i">RecvData</span><span class="d">(&amp;</span><span class="i">fvsfrefDW</span><span class="d">.</span><span class="i">Receive2</span><span class="d">,</span> <span class="m">sizeof</span><span class="d">(</span><span class="y">BusRadar</span><span class="d">),</span> <span class="d">&amp;</span><span class="i">status</span><span class="d">);</span></div>
<div class="cl"><span class="ln">38</span></div>
<div class="cl"><span class="ln">39</span>  <span class="c">// ModelReference: '</span><span class="k">&lt;Root&gt;/Forward Vehicle Sensor Fusion</span><span class="c">'</span></div>
<div class="cl"><span class="ln b">40</span>  <span class="i">Forward_Vehicle_Sensor_FusionMDLOBJ1</span><span class="d">.</span><span class="i">step</span><span class="d">(&amp;</span><span class="i">fvsfrefDW</span><span class="d">.</span><span class="i">system_time</span><span class="d">,</span></div>
<div class="cl"><span class="ln b">41</span>    <span class="d">&amp;</span><span class="i">fvsfrefDW</span><span class="d">.</span><span class="i">Receive1</span><span class="d">,</span> <span class="d">&amp;</span><span class="i">fvsfrefDW</span><span class="d">.</span><span class="i">Receive2</span><span class="d">,</span></div>
<div class="cl"><span class="ln b">42</span>    <span class="d">&amp;</span><span class="i">fvsfrefDW</span><span class="d">.</span><span class="i">ForwardVehicleSensorFusion</span><span class="d">);</span></div>
<div class="cl"><span class="ln">43</span></div>
<div class="cl"><span class="ln">44</span>  <span class="c">// Send: '</span><span class="k">&lt;Root&gt;/Send</span><span class="c">' incorporates:</span></div>
<div class="cl"><span class="ln">45</span>  <span class="c">//   ModelReference: '</span><span class="k">&lt;Root&gt;/Forward Vehicle Sensor Fusion</span><span class="c">'</span></div>
<div class="cl"><span class="ln">46</span></div>
<div class="cl"><span class="ln b">47</span>  <span class="i">TracksSendData</span><span class="d">.</span><span class="i">SendData</span><span class="d">(&amp;</span><span class="i">fvsfrefDW</span><span class="d">.</span><span class="i">ForwardVehicleSensorFusion</span><span class="d">,</span> <span class="m">sizeof</span></div>
<div class="cl"><span class="ln b">48</span>    <span class="d">(</span><span class="y">BusTrackerJPDA</span><span class="d">),</span> <span class="d">&amp;</span><span class="i">status_0</span><span class="d">);</span></div>
<div class="cl"><span class="ln">49</span><span class="d">}</span></div>
<div class="cl"><span class="ln">50</span></div>
<div class="cl"><span class="ln">51</span><span class="c">// Model initialize function</span></div>
<div class="cl"><span class="ln">52</span><span class="m">void</span> <span class="f">ForwardVehicleSensorFusionRefModelClass::initialize</span><span class="d">()</span></div>
<div class="cl"><span class="ln">53</span><span class="d">{</span></div>
<div class="cl"><span class="ln">54</span>  <span class="c">// Model Initialize function for ModelReference Block: '</span><span class="k">&lt;Root&gt;/Forward Vehicle Sensor Fusion</span><span class="c">'</span></div></div></div>
<div class="a" style="left:1033px;top:406px;width:1px;height:450px;background:#d2d6da"></div>
<div class="a" style="left:1033px;top:946px;width:1px;height:18px;background:#d2d6da"></div>
<svg style="left:1019px;top:393px" width="10" height="10" viewBox="0 0 10 10"><rect x="0.5" y="0.5" width="8.4" height="8.4" fill="#fff" stroke="#a0a0a0"/><path d="M2.4 4.7 H7" stroke="#333" stroke-width="1"/></svg>
<svg style="left:1019px;top:933px" width="10" height="10" viewBox="0 0 10 10"><rect x="0.5" y="0.5" width="8.4" height="8.4" fill="#fff" stroke="#a0a0a0"/><path d="M2.4 4.7 H7" stroke="#333" stroke-width="1"/></svg>
<div class="a" id="sbar"></div><div class="a" id="thumb"></div>
<div class="a" id="cfoot"></div>
<div class="t" style="left:996px;top:967.8px;font-family:'Liberation Mono',monospace;font-size:10.2px;letter-spacing:-0.07px;color:#2a74b8">C:\Local\SOAForwardVehicleSensorFusion_ert_rtw\SOAForwardVehicleSensorFusion.cpp</div>
<div class="t" style="left:1775px;top:966px;font-size:11px;color:#666">Ln</div>
<div class="t" style="left:1798px;top:966px;font-size:11px;color:#333">14</div>
<div class="t" style="left:1832px;top:966px;font-size:11px;color:#666">Col</div>
<div class="t" style="left:1859px;top:966px;font-size:11px;color:#333">30</div>
<!-- PROPERTY INSPECTOR -->
<div class="a" style="left:1896px;top:146px;width:22px;height:113px;background:#fff;border:1px solid #d4d4d4"></div>
<div class="t" style="left:1907px;top:157px;font-size:11px;letter-spacing:0.05px;color:#111;transform-origin:0 0;transform:rotate(90deg) translateY(-8px)">Property Inspector</div>
<!-- BOTTOM -->
<div class="a" style="left:0;top:990px;width:1920px;height:1px;background:#b2b2b2"></div>
<div class="a" style="left:1px;top:997px;width:161px;height:21px;background:#fff;border:1px solid #dadada"></div>
<div class="a" style="left:161px;top:997px;width:109px;height:21px;background:#f0f0f0;border:1px solid #d4d4d4"></div>
<div class="t" style="left:12px;top:1000px;font-size:11px;letter-spacing:-0.1px;color:#111">Code Mappings - C++ Class</div>
<div class="t" style="left:172px;top:1000px;font-size:11px;letter-spacing:-0.1px;color:#111">Diagnostic Viewer</div>
<div class="t" style="left:6px;top:1023.6px;font-size:11.5px;letter-spacing:-0.36px;color:#111">Ready</div>
<div class="t" style="left:961px;top:1023.6px;font-size:12px;letter-spacing:-0.08px;color:#1c2a6b">View diagnostics</div>
<div class="t" style="left:1426px;top:1023.6px;font-size:12px;letter-spacing:-0.8px;color:#111">121%</div>
<div class="t" style="left:1789px;top:1023.6px;font-size:12px;letter-spacing:-0.24px;color:#1c2a6b">auto(FixedStepDiscrete)</div>
</body></html>
